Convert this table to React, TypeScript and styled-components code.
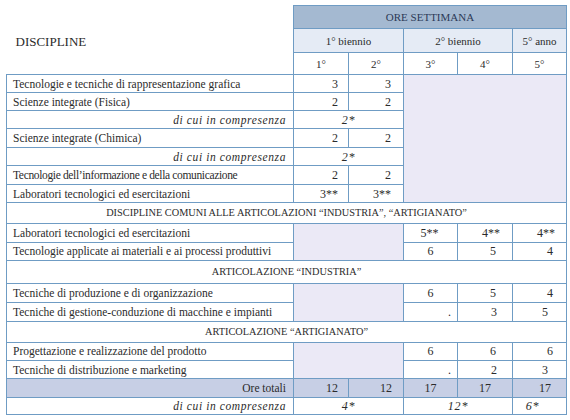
import styled, { createGlobalStyle } from 'styled-components';

const GlobalStyle = createGlobalStyle`
	body {
		margin: 0;
		background: #ffffff;
		font-family: "Liberation Serif", "Times New Roman", serif;
		color: #2b2b2b;
	}
`;

const border = '#6f9cc4';
const stipple = '#ebe9f6';

const Page = styled.div`
	padding: 5px 0 0 6px;
`;

const Table = styled.table`
	border-collapse: collapse;
	table-layout: fixed;
	width: 560px;
	font-family: "Liberation Serif", "Times New Roman", serif;
	font-size: 11.5px;
	line-height: 12px;
	color: #2b2b2b;
`;

const Row = styled.tr<{ $h: number }>`
	height: ${(p) => p.$h}px;
`;

const Title = styled.th`
	text-align: left;
	vertical-align: middle;
	font-weight: normal;
	font-size: 13px;
	padding: 5px 0 0 9px;
	border: none;
`;

const HeadCell = styled.th<{ $tone?: 'dark' | 'light' | 'plain' }>`
	font-weight: normal;
	font-size: 11px;
	padding: 0;
	text-align: center;
	border: 1px solid ${border};
	color: ${(p) => (p.$tone === 'dark' ? '#2c3a57' : '#2b2b2b')};
	background: ${(p) =>
		p.$tone === 'dark' ? '#a4b9d1' : p.$tone === 'light' ? '#e5ebf5' : '#ffffff'};
`;

const Label = styled.td`
	border: 1px solid ${border};
	padding: 0 0 0 6px;
	white-space: nowrap;
	overflow: hidden;
`;

const Note = styled.td`
	border: 1px solid ${border};
	padding: 0 7px 0 0;
	text-align: right;
	font-style: italic;
	letter-spacing: 0.6px;
`;

const Value = styled.td<{ $align?: 'right' | 'center'; $italic?: boolean; $pad?: number }>`
	border: 1px solid ${border};
	padding: 0 ${(p) => p.$pad ?? 12}px 0 0;
	text-align: ${(p) => p.$align ?? 'right'};
	font-style: ${(p) => (p.$italic ? 'italic' : 'normal')};
	font-size: 12px;
	letter-spacing: ${(p) => (p.$italic ? '0.8px' : '0')};
	white-space: nowrap;
`;

const Hatch = styled.td`
	border: 1px solid ${border};
	background: ${stipple};
	padding: 0;
`;

const Section = styled.td`
	border: 1px solid ${border};
	text-align: center;
	padding: 0;
	font-size: 10.3px;
	background: #ffffff;
`;

const TotalRow = styled(Row)`
	background: #c7cfe5;
`;

function App() {
	return (
		<Page>
			<GlobalStyle />
			<Table>
				<colgroup>
					<col style={{ width: 287 }} />
					<col style={{ width: 55 }} />
					<col style={{ width: 55 }} />
					<col style={{ width: 54 }} />
					<col style={{ width: 55 }} />
					<col style={{ width: 54 }} />
				</colgroup>
				<thead>
					<Row $h={23}>
						<Title rowSpan={3}>DISCIPLINE</Title>
						<HeadCell colSpan={5} $tone="dark">
							ORE SETTIMANA
						</HeadCell>
					</Row>
					<Row $h={24}>
						<HeadCell colSpan={2} $tone="light">1° biennio</HeadCell>
						<HeadCell colSpan={2} $tone="light">2° biennio</HeadCell>
						<HeadCell $tone="light">5° anno</HeadCell>
					</Row>
					<Row $h={22}>
						<HeadCell $tone="plain">1°</HeadCell>
						<HeadCell $tone="plain">2°</HeadCell>
						<HeadCell $tone="plain">3°</HeadCell>
						<HeadCell $tone="plain">4°</HeadCell>
						<HeadCell $tone="plain">5°</HeadCell>
					</Row>
				</thead>
				<tbody>
					<Row $h={18}>
						<Label>Tecnologie e tecniche di rappresentazione grafica</Label>
						<Value $pad={10}>3</Value>
						<Value>3</Value>
						<Hatch rowSpan={7} colSpan={3} />
					</Row>
					<Row $h={18}>
						<Label>Scienze integrate (Fisica)</Label>
						<Value $pad={10}>2</Value>
						<Value>2</Value>
					</Row>
					<Row $h={18}>
						<Note>di cui in compresenza</Note>
						<Value colSpan={2} $align="center" $italic $pad={0}>2*</Value>
					</Row>
					<Row $h={19}>
						<Label>Scienze integrate (Chimica)</Label>
						<Value $pad={10}>2</Value>
						<Value>2</Value>
					</Row>
					<Row $h={18}>
						<Note>di cui in compresenza</Note>
						<Value colSpan={2} $align="center" $italic $pad={0}>2*</Value>
					</Row>
					<Row $h={19}>
						<Label style={{ letterSpacing: -0.35 }}>
							Tecnologie dell’informazione e della comunicazione
						</Label>
						<Value $pad={10}>2</Value>
						<Value>2</Value>
					</Row>
					<Row $h={18}>
						<Label>Laboratori tecnologici ed esercitazioni</Label>
						<Value $pad={10}>3**</Value>
						<Value>3**</Value>
					</Row>
					<Row $h={21}>
						<Section colSpan={6}>
							DISCIPLINE COMUNI ALLE ARTICOLAZIONI “INDUSTRIA”, “ARTIGIANATO”
						</Section>
					</Row>
					<Row $h={18.5}>
						<Label>Laboratori tecnologici ed esercitazioni</Label>
						<Hatch rowSpan={2} colSpan={2} />
						<Value $align="center" $pad={2}>5**</Value>
						<Value $pad={12}>4**</Value>
						<Value $pad={11}>4**</Value>
					</Row>
					<Row $h={18.5}>
						<Label>Tecnologie applicate ai materiali e ai processi produttivi</Label>
						<Value $align="center" $pad={0}>6</Value>
						<Value $pad={16}>5</Value>
						<Value $pad={13}>4</Value>
					</Row>
					<Row $h={23}>
						<Section colSpan={6}>ARTICOLAZIONE “INDUSTRIA”</Section>
					</Row>
					<Row $h={18.5}>
						<Label>Tecniche di produzione e di organizzazione</Label>
						<Hatch rowSpan={2} colSpan={2} />
						<Value $align="center" $pad={0}>6</Value>
						<Value $pad={16}>5</Value>
						<Value $pad={13}>4</Value>
					</Row>
					<Row $h={19.5}>
						<Label>Tecniche di gestione-conduzione di macchine e impianti</Label>
						<Value $pad={6}>.</Value>
						<Value $pad={15}>3</Value>
						<Value $pad={18}>5</Value>
					</Row>
					<Row $h={20.5}>
						<Section colSpan={6}>ARTICOLAZIONE “ARTIGIANATO”</Section>
					</Row>
					<Row $h={18.5}>
						<Label>Progettazione e realizzazione del prodotto</Label>
						<Hatch rowSpan={2} colSpan={2} />
						<Value $align="center" $pad={0}>6</Value>
						<Value $pad={16}>6</Value>
						<Value $pad={13}>6</Value>
					</Row>
					<Row $h={18}>
						<Label>Tecniche di distribuzione e marketing</Label>
						<Value $pad={6}>.</Value>
						<Value $pad={15}>2</Value>
						<Value $pad={18}>3</Value>
					</Row>
					<TotalRow $h={18.5}>
						<Note style={{ fontStyle: 'normal', letterSpacing: 0 }}>Ore totali</Note>
						<Value $pad={10}>12</Value>
						<Value $pad={11}>12</Value>
						<Value $align="center" $pad={0}>17</Value>
						<Value $align="center" $pad={0}>17</Value>
						<Value $pad={15}>17</Value>
					</TotalRow>
					<Row $h={17.5}>
						<Note>di cui in compresenza</Note>
						<Value colSpan={2} $align="center" $italic $pad={0}>4*</Value>
						<Value colSpan={2} $align="center" $italic $pad={0}>12*</Value>
						<Value $align="center" $italic $pad={14}>6*</Value>
					</Row>
				</tbody>
			</Table>
		</Page>
	);
}

export default App;
